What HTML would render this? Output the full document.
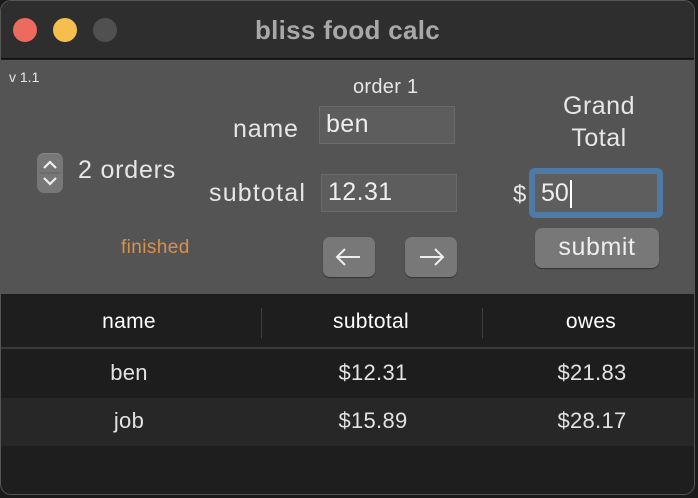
<!DOCTYPE html>
<html><head><style>
*{margin:0;padding:0;box-sizing:border-box}
body{width:698px;height:498px;background:#1a1a1a;font-family:"Liberation Sans",sans-serif;overflow:hidden;position:relative}
.win{position:absolute;left:0;top:0;width:695px;height:495px;border-radius:11px;overflow:hidden;background:#1e1e1e;border:1px solid #555}
.title{position:absolute;left:0;top:0;width:100%;height:58px;background:#2e2e2e;border-bottom:1px solid #111}
.dot{position:absolute;top:17px;width:24px;height:24px;border-radius:50%}
.title .t{position:absolute;left:0;width:100%;top:14px;text-align:center;color:#a8a8a8;font-weight:bold;font-size:26px;letter-spacing:0.3px}
.panel{position:absolute;left:0;top:59px;width:100%;height:234px;background:#545454}
.a{position:absolute;color:#e6e6e6;white-space:nowrap}
.fld{position:absolute;background:#5d5d5d;border:1px solid #6a6a6a;color:#eee;font-size:25px;padding-left:6px;line-height:34px;letter-spacing:0.4px}
.btn{position:absolute;background:#787878;border-radius:7px;box-shadow:0 1px 1px #333;color:#eee;text-align:center}
.tbl{position:absolute;left:0;top:293px;width:100%}
.row{position:absolute;left:0;width:100%;height:48px;color:#e2e2e2;font-size:22px;letter-spacing:0.3px}
.row span{position:absolute;top:10px;width:0;text-align:center;white-space:nowrap}
.row span i{font-style:normal;display:inline-block;transform:translateX(-50%)}
</style></head><body>
<div class="win">
<div class="title">
<div class="dot" style="left:12px;background:#ed6a5e"></div>
<div class="dot" style="left:52px;background:#f5bf4f"></div>
<div class="dot" style="left:92px;background:#505050"></div>
<div class="t">bliss food calc</div>
</div>
<div class="panel">
<div class="a" style="left:8px;top:9px;font-size:14px">v 1.1</div>
<div style="position:absolute;left:36px;top:93px;width:26px;height:40px;background:#777;border-radius:7px;border-top:1px solid #888"></div>
<svg style="position:absolute;left:36px;top:93px" width="26" height="40"><path d="M7 15l6-6 6 6M7 25l6 6 6-6" stroke="#eee" stroke-width="2.2" fill="none"/><line x1="2" y1="20" x2="24" y2="20" stroke="#666"/></svg>
<div class="a" style="left:77px;top:96px;font-size:25px;letter-spacing:0.8px">2 orders</div>
<div class="a" style="left:120px;top:177px;font-size:19px;color:#d9904a;letter-spacing:0.4px">finished</div>
<div class="a" style="left:352px;top:16px;font-size:20px;letter-spacing:0.3px">order 1</div>
<div class="a" style="left:232px;top:55px;font-size:25px;letter-spacing:0.8px">name</div>
<div class="fld" style="left:318px;top:46px;width:136px;height:38px">ben</div>
<div class="a" style="left:208px;top:119px;font-size:25px;letter-spacing:1.2px">subtotal</div>
<div class="fld" style="left:320px;top:114px;width:136px;height:38px">12.31</div>
<div class="btn" style="left:322px;top:177px;width:52px;height:40px"><svg width="52" height="40"><path d="M14 20h23M22 12l-8 8 8 8" stroke="#eee" stroke-width="2" fill="none"/></svg></div>
<div class="btn" style="left:404px;top:177px;width:52px;height:40px"><svg width="52" height="40"><path d="M15 20h23M30 12l8 8-8 8" stroke="#eee" stroke-width="2" fill="none"/></svg></div>
<div class="a" style="left:540px;top:30px;width:116px;text-align:center;font-size:25px;line-height:32px;letter-spacing:0.5px">Grand<br>Total</div>
<div class="a" style="left:512px;top:121px;font-size:24px">$</div>
<div style="position:absolute;left:528px;top:108px;width:134px;height:50px;border:6px solid #4d7aa6;border-radius:6px;background:#5e5e5e;color:#eee;font-size:25px;padding-left:6px;line-height:38px">50<span style="display:inline-block;width:2px;height:28px;background:#fff;vertical-align:middle;margin-left:1px"></span></div>
<div class="btn" style="left:534px;top:168px;width:124px;height:40px;font-size:25px;line-height:38px;letter-spacing:0.6px">submit</div>
</div>
<div class="tbl">
<div class="row" style="top:0;height:55px;background:#1e1e1e;border-bottom:2px solid #3a3a3a;color:#fff;font-size:21px">
<span style="left:128px;top:16px"><i>name</i></span><span style="left:370px;top:16px"><i>subtotal</i></span><span style="left:590px;top:16px"><i>owes</i></span>
<div style="position:absolute;left:260px;top:14px;width:1px;height:30px;background:#3e3e3e"></div>
<div style="position:absolute;left:481px;top:14px;width:1px;height:30px;background:#3e3e3e"></div>
</div>
<div class="row" style="top:56px;background:#1d1d1d"><span style="left:128px"><i>ben</i></span><span style="left:372px"><i>$12.31</i></span><span style="left:591px"><i>$21.83</i></span></div>
<div class="row" style="top:104px;background:#272727"><span style="left:128px"><i>job</i></span><span style="left:372px"><i>$15.89</i></span><span style="left:591px"><i>$28.17</i></span></div>
</div>
</div>
</body></html>
